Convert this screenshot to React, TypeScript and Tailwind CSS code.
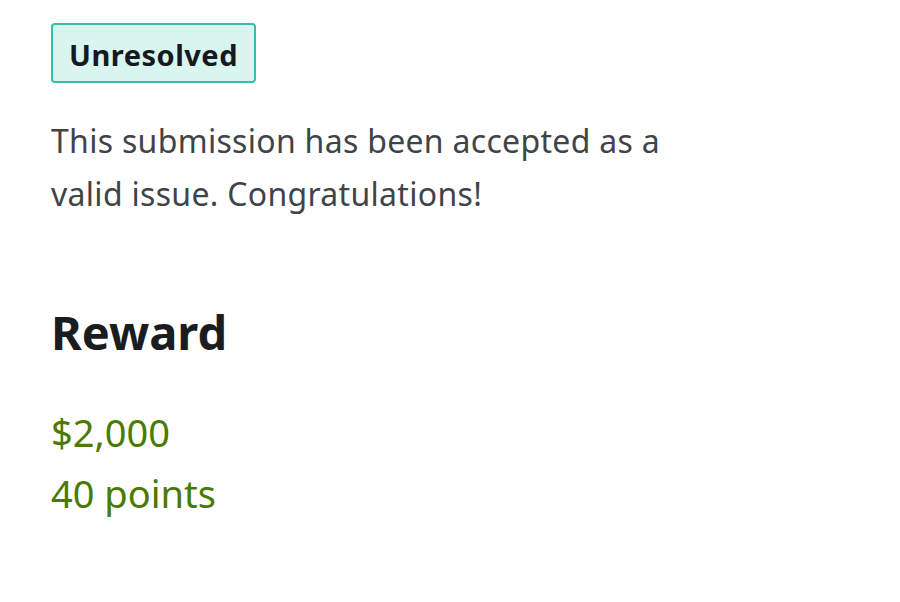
import React from "react";

export default function App() {
  return (
    <div className="min-h-[602px] w-[900px] bg-white pl-[51px] pt-[23px]" style={{ fontFamily: '"Noto Sans", "Open Sans", sans-serif' }}>
      <div className="inline-flex h-[60px] items-center rounded-[4px] border-2 border-[#34c0a6] bg-[#d9f5f0] px-[16px] pt-[3px] text-[29px] font-bold tracking-[0.5px] text-[#16191d]">
        Unresolved
      </div>
      <p className="mt-[31px] w-[660px] text-[32px] leading-[53px] tracking-[0.3px] text-[#3f4448]">
        This submission has been accepted as a valid issue. Congratulations!
      </p>
      <h2 className="mt-[82px] text-[47px] font-bold leading-[60px] text-[#1a1c20]">Reward</h2>
      <div className="mt-[40px] text-[38px] leading-[61px] text-[#4a7a00]">
        <div>$2,000</div>
        <div>40 points</div>
      </div>
    </div>
  );
}
